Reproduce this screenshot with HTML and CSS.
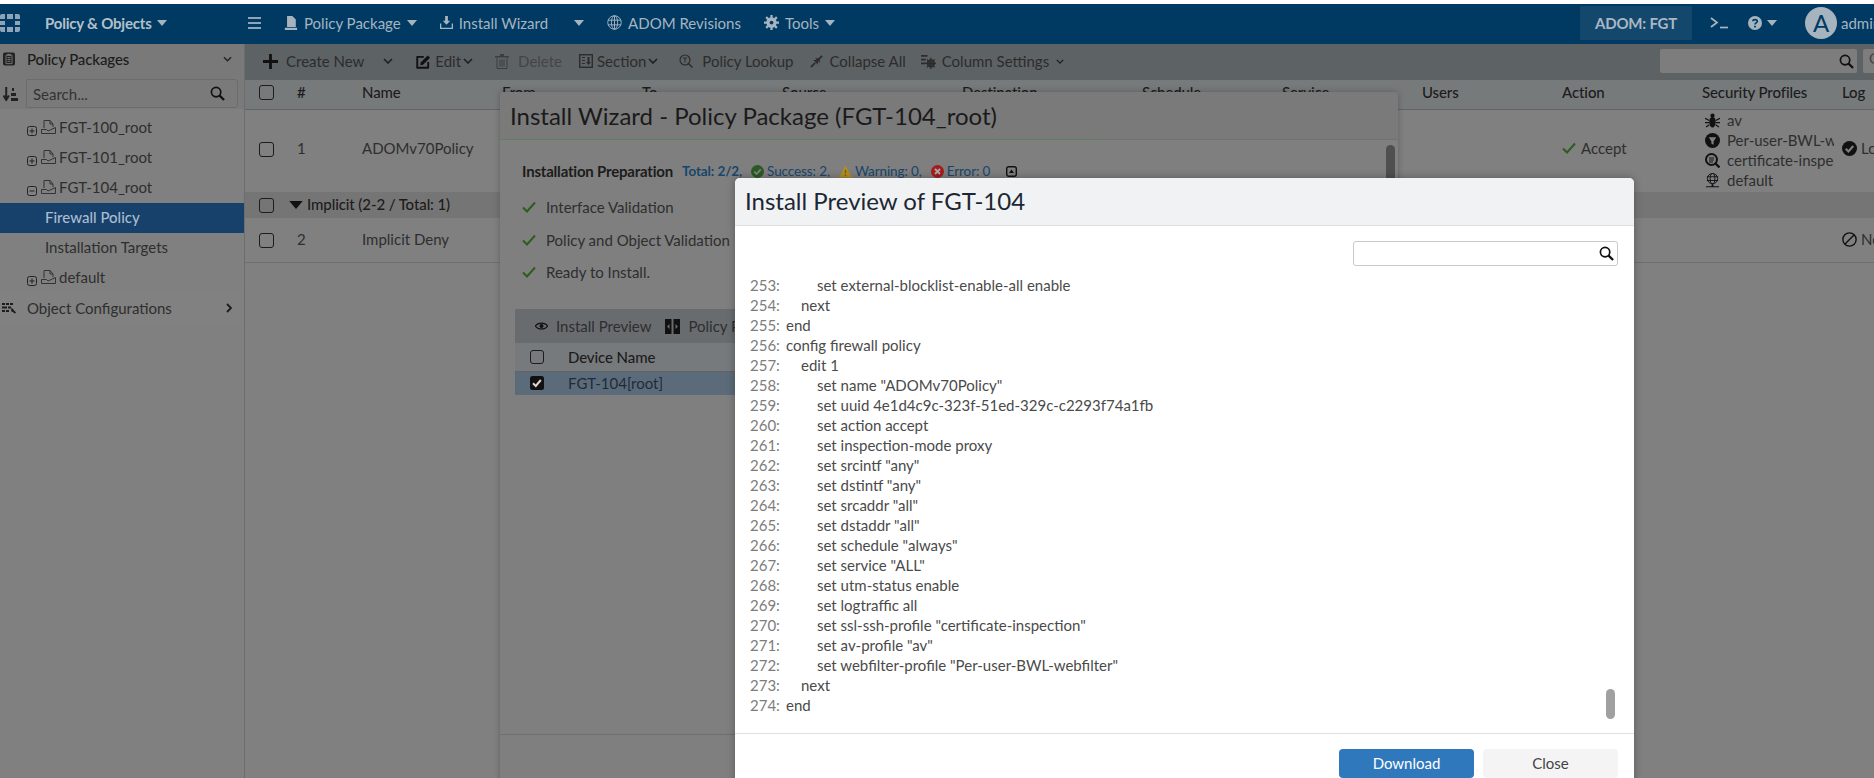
FILE: index.html
```html
<!DOCTYPE html>
<html lang="en">
<head>
<meta charset="utf-8">
<title>Policy &amp; Objects</title>
<link rel="stylesheet" href="styles.css">
</head>
<body>
<svg class="defs" width="0" height="0" aria-hidden="true">
  <symbol id="caret" viewBox="0 0 10 6"><path d="M0 0h10L5 6z" fill="currentColor"/></symbol>
  <symbol id="chev" viewBox="0 0 10 6"><path d="M1 1l4 4 4-4" fill="none" stroke="currentColor" stroke-width="1.5"/></symbol>
  <symbol id="search" viewBox="0 0 16 16"><circle cx="6.5" cy="6.5" r="5" fill="none" stroke="currentColor" stroke-width="1.8"/><path d="M10 10l5 5" stroke="currentColor" stroke-width="2.4"/></symbol>
  <symbol id="check" viewBox="0 0 14 12"><path d="M1 6.5l4 4 8-9" fill="none" stroke="currentColor" stroke-width="2"/></symbol>
  <symbol id="plusbox" viewBox="0 0 10 10"><rect x=".5" y=".5" width="9" height="9" rx="2" fill="none" stroke="currentColor"/><path d="M2.500 5h5M5 2.500v5" stroke="currentColor"/></symbol>
  <symbol id="minusbox" viewBox="0 0 10 10"><rect x=".5" y=".5" width="9" height="9" rx="2" fill="none" stroke="currentColor"/><path d="M2.500 5h5" stroke="currentColor"/></symbol>
  <symbol id="doc" viewBox="0 0 15 14"><path d="M3 8V.5h6l3 3.500V7M9 .5v3.500h3M.5 9.500h5L7 11l7.500-3.500v6H.5z" fill="none" stroke="currentColor"/></symbol>
  <symbol id="bigdoc" viewBox="0 0 15 16"><path d="M3 0h6l4 4v8.500H3zM.5 13.500h14V16H.5z" fill="currentColor"/></symbol>
  <symbol id="install" viewBox="0 0 14 14"><path d="M5.500 0h3v5H11L7 9.500 3 5h2.500z" fill="currentColor"/><path d="M.7 8v5.300h12.600V8" fill="none" stroke="currentColor" stroke-width="1.400"/></symbol>
  <symbol id="globe" viewBox="0 0 16 16"><g fill="none" stroke="currentColor"><circle cx="8" cy="8" r="7.200"/><ellipse cx="8" cy="8" rx="3.300" ry="7.200"/><path d="M8 1v14M1 5.500h14M1 10.500h14"/></g></symbol>
  <symbol id="gear" viewBox="0 0 16 16"><circle cx="8" cy="8" r="5.500" fill="currentColor"/><path d="M8 0v16M0 8h16M2.300 2.300l11.400 11.400M13.700 2.300L2.300 13.700" stroke="currentColor" stroke-width="2.400"/><circle cx="8" cy="8" r="2" fill="#003a62"/></symbol>
  <symbol id="logo" viewBox="0 0 20 18"><path d="M2 0h3v5H0V2a2 2 0 012-2zM7 0h6v5H7zM15 0h3a2 2 0 012 2v3h-5zM0 7h5v4H0zM15 7h5v4h-5zM0 13h5v5H2a2 2 0 01-2-2zM7 13h6v5H7zM15 13h5v3a2 2 0 01-2 2h-3z" fill="currentColor"/></symbol>
  <symbol id="clip" viewBox="0 0 13 14"><rect width="13" height="14" rx="2" fill="currentColor"/><path d="M3.200 3h6.600v9H3.200z" fill="none" stroke="#797979"/><path d="M4.800 5.500h3.400M4.800 7.500h3.400M4.800 9.500h3.400" stroke="#797979"/><path d="M4.500 1.500h4V3h-4z" fill="#797979"/></symbol>
  <symbol id="sort" viewBox="0 0 15 14"><path d="M3.200 0v12M.5 8.500L3.200 13l2.700-4.500" fill="none" stroke="currentColor" stroke-width="2"/><path d="M9 1h2v3H9zM8 6h5v3H8zM8 11h7v3H8z" fill="currentColor"/></symbol>
  <symbol id="objcfg" viewBox="0 0 14 12"><path d="M0 1h3v2H0zM4 1h3v2H4zM8 1h3v2H8zM0 4.500h5v2H0zM6 4.500h3v2H6zM0 8h3v2H0zM4 8h3v2H4zM9.500 5.500l4.500 5-1 1-4-2.500z" fill="currentColor"/></symbol>
  <symbol id="plus" viewBox="0 0 16 16"><path d="M6.500 0h3v6.500H16v3H9.500V16h-3V9.500H0v-3h6.500z" fill="currentColor"/></symbol>
  <symbol id="edit" viewBox="0 0 16 16"><path d="M13 8.500V14.700H1.300V3h7" fill="none" stroke="currentColor" stroke-width="2" stroke-linejoin="round"/><path d="M5 9L12.500 1.500 15 4l-7.500 7.500-3 .5z" fill="currentColor"/></symbol>
  <symbol id="trash" viewBox="0 0 14 15"><path d="M0 2h14v1.500H0zM5 0h4v2H5z" fill="currentColor"/><path d="M2 4v10.500h10V4M5 5.500v7M7 5.500v7M9 5.500v7" fill="none" stroke="currentColor"/></symbol>
  <symbol id="section" viewBox="0 0 14 14"><rect x=".7" y=".7" width="12.600" height="12.600" fill="none" stroke="currentColor" stroke-width="1.400"/><path d="M3 3.500h3M3 6.500h3M3 9.500h3" stroke="currentColor"/><path d="M8.500 3v5H7l2.500 3L12 8h-1.500V3z" fill="currentColor"/></symbol>
  <symbol id="lookup" viewBox="0 0 14 14"><circle cx="6" cy="6" r="5" fill="none" stroke="currentColor" stroke-width="1.200"/><path d="M9.500 9.500L13.500 13.500" stroke="currentColor" stroke-width="1.500"/><path d="M4 4h4M6 4v4.500" stroke="currentColor"/></symbol>
  <symbol id="collapse" viewBox="0 0 14 14"><path d="M1 13l4.500-4.500M13 1L8.500 5.500" stroke="currentColor" stroke-width="2"/><path d="M3.500 5.500h5v5zM5.500 3.500h5v5z" fill="currentColor"/></symbol>
  <symbol id="cols" viewBox="0 0 16 16"><path d="M0 1h7v2H0zM0 5h5v2H0zM0 9h5v2H0z" fill="currentColor"/><circle cx="10.500" cy="10" r="3.500" fill="none" stroke="currentColor" stroke-width="2"/><path d="M10.500 4v12M4.500 10h12M6.300 5.800l8.400 8.400M14.700 5.800l-8.400 8.400" stroke="currentColor" stroke-width="1.300"/></symbol>
  <symbol id="bug" viewBox="0 0 14 14"><ellipse cx="7" cy="8.500" rx="3" ry="5" fill="currentColor"/><circle cx="7" cy="2.500" r="2" fill="currentColor"/><path d="M0 5l4 2M14 5l-4 2M0 9h4M14 9h-4M1 13l3-2M13 13l-3-2" stroke="currentColor" stroke-width="1.200"/></symbol>
  <symbol id="shield" viewBox="0 0 14 14"><circle cx="7" cy="7" r="7" fill="currentColor"/><path d="M3.500 4h7L8 8v3L6 10V8z" fill="#808080"/></symbol>
  <symbol id="magdoc" viewBox="0 0 15 15"><circle cx="6.500" cy="6.500" r="5.500" fill="none" stroke="currentColor" stroke-width="2"/><path d="M4 5h5M4 7h5M4 9h4" stroke="currentColor"/><path d="M10.500 10.500l4 4" stroke="currentColor" stroke-width="2.400"/></symbol>
  <symbol id="web" viewBox="0 0 14 16"><g fill="none" stroke="currentColor"><circle cx="7" cy="6" r="5.500"/><ellipse cx="7" cy="6" rx="2.500" ry="5.500"/><path d="M1 4h12M1 8h12"/></g><path d="M0 14h14v1.200H0zM6 12h2v2H6z" fill="currentColor"/></symbol>
  <symbol id="okc" viewBox="0 0 14 14"><circle cx="7" cy="7" r="7" fill="currentColor"/><path d="M3.500 7.200l2.500 2.500 4.500-5" fill="none" stroke="#808080" stroke-width="2"/></symbol>
  <symbol id="ban" viewBox="0 0 14 14"><circle cx="7" cy="7" r="6.200" fill="none" stroke="currentColor" stroke-width="1.300"/><path d="M2.800 11.200l8.400-8.400" stroke="currentColor" stroke-width="1.300"/></symbol>
  <symbol id="warn" viewBox="0 0 14 13"><path d="M7 0l7 13H0z" fill="currentColor"/><path d="M7 4.500v4M7 9.800v1.500" stroke="#6b5a18" stroke-width="1.400"/></symbol>
  <symbol id="errc" viewBox="0 0 14 14"><circle cx="7" cy="7" r="7" fill="currentColor"/><path d="M4.300 4.300l5.400 5.400M9.700 4.300l-5.400 5.400" stroke="#a9a9a9" stroke-width="2"/></symbol>
  <symbol id="collapsebox" viewBox="0 0 11 11"><rect x=".7" y=".7" width="9.600" height="9.600" rx="2" fill="none" stroke="currentColor" stroke-width="1.400"/><path d="M5.500 3.500L8 7H3z" fill="currentColor"/></symbol>
  <symbol id="eye" viewBox="0 0 14 10"><path d="M.5 5C3 .8 11 .8 13.500 5 11 9.200 3 9.200.5 5z" fill="none" stroke="currentColor" stroke-width="1.400"/><circle cx="7" cy="5" r="2.200" fill="currentColor"/></symbol>
  <symbol id="compare" viewBox="0 0 15 15"><path d="M0 0h6.500v15H0zM8.500 0H15v15H8.500z" fill="currentColor"/><path d="M2 7.500L4.500 5v5zM13 7.500L10.500 5v5z" fill="#6a6a6a"/></symbol>
  <symbol id="ticked" viewBox="0 0 14 14"><rect width="14" height="14" rx="2.500" fill="currentColor"/><path d="M3 7.200l2.800 2.800 5-6" fill="none" stroke="#d8d8d8" stroke-width="2"/></symbol>
  <symbol id="question" viewBox="0 0 14 14"><circle cx="7" cy="7" r="7" fill="currentColor"/><path d="M4.800 5.300C5 3 9.300 3 9.300 5.300 9.300 7 7 6.800 7 8.600" fill="none" stroke="#003a62" stroke-width="1.600"/><path d="M6.100 9.800h1.800v1.700H6.100z" fill="#003a62"/></symbol>
  <symbol id="prompt" viewBox="0 0 18 12"><path d="M1 1l6 4.500L1 10" fill="none" stroke="currentColor" stroke-width="1.700"/><path d="M10 10.500h8" stroke="currentColor" stroke-width="1.700"/></symbol>
</svg>

<div class="page">
  <header class="nav">
    <div class="brand">
      <svg class="i-logo"><use href="#logo"/></svg>
      <span class="brand-name">Policy &amp; Objects</span>
      <svg class="i-caret"><use href="#caret"/></svg>
    </div>
    <div class="menu">
      <span class="burger"></span>
      <span class="menu-item"><svg class="i-14"><use href="#bigdoc"/></svg>Policy Package<svg class="i-caret"><use href="#caret"/></svg></span>
      <span class="menu-item"><svg class="i-13"><use href="#install"/></svg>Install Wizard<svg class="i-caret caret-far"><use href="#caret"/></svg></span>
      <span class="menu-item"><svg class="i-15"><use href="#globe"/></svg>ADOM Revisions</span>
      <span class="menu-item"><svg class="i-15"><use href="#gear"/></svg>Tools<svg class="i-caret"><use href="#caret"/></svg></span>
    </div>
    <div class="nav-right">
      <span class="adom">ADOM: FGT</span>
      <svg class="i-prompt"><use href="#prompt"/></svg>
      <svg class="i-help"><use href="#question"/></svg>
      <svg class="i-caret"><use href="#caret"/></svg>
      <span class="avatar">A</span>
      <span class="user">admin</span>
    </div>
  </header>

  <div class="main">
    <aside class="side">
      <div class="side-head"><svg class="i-clip"><use href="#clip"/></svg><span class="side-title">Policy Packages</span><svg class="i-chev"><use href="#chev"/></svg></div>
      <div class="side-search">
        <svg class="i-sort"><use href="#sort"/></svg>
        <div class="side-input"><span>Search...</span><svg class="i-search"><use href="#search"/></svg></div>
      </div>
      <div class="tree-row"><svg class="i-box"><use href="#plusbox"/></svg><svg class="i-doc"><use href="#doc"/></svg>FGT-100_root</div>
      <div class="tree-row"><svg class="i-box"><use href="#plusbox"/></svg><svg class="i-doc"><use href="#doc"/></svg>FGT-101_root</div>
      <div class="tree-row"><svg class="i-box"><use href="#minusbox"/></svg><svg class="i-doc"><use href="#doc"/></svg>FGT-104_root</div>
      <div class="tree-row tree-sub tree-active">Firewall Policy</div>
      <div class="tree-row tree-sub">Installation Targets</div>
      <div class="tree-row"><svg class="i-box"><use href="#plusbox"/></svg><svg class="i-doc"><use href="#doc"/></svg>default</div>
      <div class="side-foot"><svg class="i-obj"><use href="#objcfg"/></svg><span class="side-title">Object Configurations</span><svg class="i-chevr" viewBox="0 0 6 10"><path d="M1 1l4 4-4 4" fill="none" stroke="currentColor" stroke-width="1.800"/></svg></div>
    </aside>

    <section class="content">
      <div class="toolbar">
        <span class="tool tool-create"><svg class="i-plus"><use href="#plus"/></svg>Create New<svg class="i-chevt chev-far"><use href="#chev"/></svg></span>
        <span class="tool tool-edit"><svg class="i-edit"><use href="#edit"/></svg>Edit<svg class="i-chevt"><use href="#chev"/></svg></span>
        <span class="tool tool-off"><svg class="i-trash"><use href="#trash"/></svg>Delete</span>
        <span class="tool tool-section"><svg class="i-14"><use href="#section"/></svg>Section<svg class="i-chevt"><use href="#chev"/></svg></span>
        <span class="tool tool-lookup"><svg class="i-14"><use href="#lookup"/></svg>Policy Lookup</span>
        <span class="tool tool-collapse"><svg class="i-13"><use href="#collapse"/></svg>Collapse All</span>
        <span class="tool tool-cols"><svg class="i-15"><use href="#cols"/></svg>Column Settings<svg class="i-chevs"><use href="#chev"/></svg></span>
        <div class="tool-search"><svg class="i-search"><use href="#search"/></svg></div>
        <div class="tool-next">G</div>
      </div>
      <div class="t-row t-head">
        <span class="cb"></span><span>#</span><span>Name</span><span>From</span><span>To</span><span>Source</span><span>Destination</span><span>Schedule</span><span>Service</span><span>Users</span><span>Action</span><span>Security Profiles</span><span>Log</span>
      </div>
      <div class="t-row t-one">
        <span class="cb"></span><span>1</span><span>ADOMv70Policy</span><span></span><span></span><span></span><span></span><span></span><span></span><span></span>
        <span class="cell-accept"><svg class="i-ok"><use href="#check"/></svg>Accept</span>
        <span class="profiles">
          <span class="profile"><svg class="i-prof"><use href="#bug"/></svg>av</span>
          <span class="profile"><svg class="i-prof"><use href="#shield"/></svg>Per-user-BWL-webfilter</span>
          <span class="profile"><svg class="i-prof"><use href="#magdoc"/></svg>certificate-inspection</span>
          <span class="profile"><svg class="i-prof"><use href="#web"/></svg>default</span>
        </span>
        <span class="cell-log"><svg class="i-log"><use href="#okc"/></svg>Log</span>
      </div>
      <div class="t-group">
        <span class="cb"></span><svg class="i-group"><use href="#caret"/></svg><span class="group-label">Implicit (2-2 / Total: 1)</span>
      </div>
      <div class="t-row t-two">
        <span class="cb"></span><span>2</span><span>Implicit Deny</span><span></span><span></span><span></span><span></span><span></span><span></span><span></span><span></span><span></span>
        <span class="cell-log"><svg class="i-log"><use href="#ban"/></svg>No Log</span>
      </div>
    </section>
  </div>

  <div class="wizard">
    <div class="wiz-title">Install Wizard - Policy Package (FGT-104_root)</div>
    <div class="wiz-progress"><span class="wiz-bar" style="width:600px"></span></div>
    <div class="wiz-body">
      <div class="wiz-summary">
        <span class="wiz-label">Installation Preparation</span>
        <span class="wiz-stats">
          <b class="stat-total">Total: 2/2,</b>
          <span class="stat"><svg class="i-stat s-ok"><use href="#okc"/></svg>Success: 2,</span>
          <span class="stat"><svg class="i-stat s-warn"><use href="#warn"/></svg>Warning: 0,</span>
          <span class="stat"><svg class="i-stat s-err"><use href="#errc"/></svg>Error: 0</span>
          <svg class="i-colbox"><use href="#collapsebox"/></svg>
        </span>
      </div>
      <div class="wiz-check first"><svg class="i-ok"><use href="#check"/></svg>Interface Validation</div>
      <div class="wiz-check"><svg class="i-ok"><use href="#check"/></svg>Policy and Object Validation</div>
      <div class="wiz-check last"><svg class="i-ok"><use href="#check"/></svg>Ready to Install.</div>
      <div class="dev">
        <div class="dev-tools">
          <span class="dev-tool"><svg class="i-eye"><use href="#eye"/></svg>Install Preview</span>
          <span class="dev-tool"><svg class="i-cmp"><use href="#compare"/></svg>Policy Package Diff</span>
        </div>
        <div class="dev-head"><span class="cb"></span><span>Device Name</span></div>
        <div class="dev-row"><svg class="i-ticked"><use href="#ticked"/></svg><span>FGT-104[root]</span></div>
      </div>
    </div>
    <div class="wiz-foot"></div>
    <span class="wiz-scroll"></span>
  </div>

  <div class="preview">
    <div class="pv-title">Install Preview of FGT-104</div>
    <div class="pv-body">
      <div class="pv-search"><svg class="i-search"><use href="#search"/></svg></div>
      <div class="code">
        <div class="ln"><span class="no">253:</span><span class="tx i2">set external-blocklist-enable-all enable</span></div>
        <div class="ln"><span class="no">254:</span><span class="tx i1">next</span></div>
        <div class="ln"><span class="no">255:</span><span class="tx">end</span></div>
        <div class="ln"><span class="no">256:</span><span class="tx">config firewall policy</span></div>
        <div class="ln"><span class="no">257:</span><span class="tx i1">edit 1</span></div>
        <div class="ln"><span class="no">258:</span><span class="tx i2">set name "ADOMv70Policy"</span></div>
        <div class="ln"><span class="no">259:</span><span class="tx i2">set uuid 4e1d4c9c-323f-51ed-329c-c2293f74a1fb</span></div>
        <div class="ln"><span class="no">260:</span><span class="tx i2">set action accept</span></div>
        <div class="ln"><span class="no">261:</span><span class="tx i2">set inspection-mode proxy</span></div>
        <div class="ln"><span class="no">262:</span><span class="tx i2">set srcintf "any"</span></div>
        <div class="ln"><span class="no">263:</span><span class="tx i2">set dstintf "any"</span></div>
        <div class="ln"><span class="no">264:</span><span class="tx i2">set srcaddr "all"</span></div>
        <div class="ln"><span class="no">265:</span><span class="tx i2">set dstaddr "all"</span></div>
        <div class="ln"><span class="no">266:</span><span class="tx i2">set schedule "always"</span></div>
        <div class="ln"><span class="no">267:</span><span class="tx i2">set service "ALL"</span></div>
        <div class="ln"><span class="no">268:</span><span class="tx i2">set utm-status enable</span></div>
        <div class="ln"><span class="no">269:</span><span class="tx i2">set logtraffic all</span></div>
        <div class="ln"><span class="no">270:</span><span class="tx i2">set ssl-ssh-profile "certificate-inspection"</span></div>
        <div class="ln"><span class="no">271:</span><span class="tx i2">set av-profile "av"</span></div>
        <div class="ln"><span class="no">272:</span><span class="tx i2">set webfilter-profile "Per-user-BWL-webfilter"</span></div>
        <div class="ln"><span class="no">273:</span><span class="tx i1">next</span></div>
        <div class="ln"><span class="no">274:</span><span class="tx">end</span></div>
      </div>
      <span class="pv-scroll"></span>
    </div>
    <div class="pv-foot">
      <button class="btn btn-primary" type="button">Download</button>
      <button class="btn btn-plain" type="button">Close</button>
    </div>
  </div>
</div>
</body>
</html>
```

FILE: styles.css
```css
* { box-sizing: border-box; }
html, body { margin: 0; padding: 0; background: #fff; }
body { font-family: Lato, "Open Sans", sans-serif; font-size: 15px; color: #262626; }
.defs { position: absolute; }
svg { display: block; flex: none; }

.page { position: relative; width: 1874px; height: 778px; overflow: hidden; padding-top: 4px; background: #808080; box-shadow: inset 0 4px 0 #fff; }

/* top bar */
.nav { display: flex; align-items: center; height: 40px; padding-bottom: 3px; background: #003a62; color: #a6b4c0; }
.brand { display: flex; align-items: center; width: 248px; flex: none; }
.i-logo { width: 20px; height: 18px; color: #8fa4b6; }
.brand-name { margin-left: 25px; font-weight: 700; color: #b3c0cb; letter-spacing: -.2px; }
.i-caret { width: 10px; height: 6px; margin-left: 5px; color: #a6b4c0; }
.menu { display: flex; align-items: center; gap: 23px; }
.burger { width: 13px; height: 12px; border-top: 2px solid #8fa4b6; border-bottom: 2px solid #8fa4b6; position: relative; }
.burger::after { content: ""; position: absolute; left: 0; right: 0; top: 3px; height: 2px; background: #8fa4b6; }
.menu-item { display: flex; align-items: center; gap: 6px; }
.menu-item .i-caret { margin-left: 0; }
.menu-item .caret-far { margin-left: 20px; }
.i-13 { width: 13px; height: 13px; }
.i-14 { width: 14px; height: 14px; }
.i-15 { width: 15px; height: 15px; }
.nav-right { display: flex; align-items: center; margin-left: auto; width: 294px; flex: none; overflow: hidden; height: 37px; }
.adom { width: 112px; height: 34px; display: flex; align-items: center; justify-content: center; background: #14476c; font-weight: 700; color: #a9b7c3; flex: none; letter-spacing: -.2px; }
.i-prompt { width: 18px; height: 12px; margin-left: 18px; color: #a6b4c0; }
.i-help { width: 14px; height: 14px; margin-left: 20px; color: #a6b4c0; }
.avatar { width: 32px; height: 32px; margin-left: 28px; border-radius: 50%; background: #a6b4c0; color: #003a62; display: flex; align-items: center; justify-content: center; font-size: 24px; flex: none; }
.user { margin-left: 4px; color: #a6b4c0; }

/* main */
.main { display: flex; height: 734px; }
.side { width: 245px; flex: none; border-right: 1px solid #6d6d6d; background: #808080; color: #333; }
.side-head { display: flex; align-items: center; height: 35px; background: #797979; padding: 0 12px 6px 3px; color: #222; }
.i-clip { width: 12px; height: 14px; color: #222; }
.side-title { margin-left: 12px; flex: 1; }
.side-head .side-title { font-weight: 500; color: #1c1c1c; letter-spacing: -.1px; }
.i-chev { width: 9px; height: 6px; color: #222; }
.side-search { display: flex; align-items: flex-start; height: 34px; padding-left: 3px; background: linear-gradient(#7a7a7a 30px, #808080 30px); }
.i-sort { width: 15px; height: 14px; margin-top: 8px; color: #222; }
.side-input { display: flex; align-items: center; justify-content: space-between; margin-left: 8px; width: 212px; height: 29px; padding: 0 12px 0 6px; border: 1px solid #6c6c6c; border-radius: 0 3px 3px 0; color: #333; }
.i-search { width: 15px; height: 15px; color: #111; }
.tree-row { display: flex; align-items: center; height: 30px; padding: 0 0 2px 27px; color: #2e2e2e; }
.i-box { width: 10px; height: 10px; margin-top: 7px; color: #222; }
.i-doc { width: 15px; height: 14px; margin: 0 3px 0 4px; color: #333; }
.tree-sub { padding-left: 45px; }
.tree-active { background: #17406a; color: #a8bdd1; font-weight: 500; }
.side-foot { display: flex; align-items: center; height: 30px; padding: 0 12px 0 2px; background: #818181; color: #2e2e2e; }
.side-foot .side-title { margin-left: 11px; }
.i-obj { width: 14px; height: 12px; color: #1c1c1c; }
.i-chevr { width: 6px; height: 10px; color: #1c1c1c; }

.content { flex: 1; min-width: 0; }
.toolbar { display: flex; align-items: center; height: 36px; padding: 0 0 2px 18px; background: #5d6265; color: #2c2c2c; position: relative; }
.tool { display: flex; align-items: center; gap: 4px; white-space: nowrap; }
.tool-edit { margin-left: 23px; }
.tool-off { margin-left: 22px; color: #454545; gap: 9px; }
.tool-section { margin-left: 17px; }
.tool-lookup { margin-left: 21px; gap: 9px; }
.tool-collapse { margin-left: 17px; gap: 6px; }
.tool-cols { margin-left: 15px; gap: 6px; }
.i-plus { width: 15px; height: 15px; color: #111; margin-right: 4px; }
.i-chevt { width: 10px; height: 6px; margin-left: -2px; color: #1c1c1c; }
.tool-create .chev-far { margin-left: 15px; }
.i-chevs { width: 8px; height: 5px; margin-left: 1px; color: #1c1c1c; }
.i-edit { width: 15px; height: 15px; color: #111; }
.i-trash { width: 14px; height: 15px; color: #3d3d3d; }
.tool-search { margin-left: auto; width: 197px; height: 24px; background: #7d7d7d; border-radius: 2px; display: flex; align-items: center; justify-content: flex-end; padding-right: 3px; flex: none; }
.tool-next { width: 20px; height: 24px; margin-left: 6px; margin-right: -9px; background: #7d7d7d; border-radius: 2px 0 0 2px; color: #444; padding-left: 6px; line-height: 18px; flex: none; overflow: hidden; }

.t-row { display: grid; grid-template-columns: 52px 65px 140px 140px 140px 180px 180px 140px 140px 140px 140px 140px 1fr; align-items: center; }
.t-row > span { padding-bottom: 2px; }
.t-row > .cb { padding-bottom: 0; }
.t-head { height: 30px; padding-bottom: 4px; background: #777a7b; border-bottom: 1px solid #636363; font-weight: 500; color: #1c1c1c; letter-spacing: -.1px; }
.cb { display: block; width: 15px; height: 15px; margin-left: 14px; border: 1.500px solid #1c1c1c; border-radius: 3px; }
.t-one { height: 82px; padding-bottom: 4px; color: #2e2e2e; }
.t-two { height: 45px; border-bottom: 1px solid #6f6f6f; color: #2e2e2e; }
.t-group { display: flex; align-items: center; height: 26px; background: #757575; font-weight: 500; color: #1c1c1c; letter-spacing: -.1px; }
.group-label { padding-bottom: 2px; }
.i-group { width: 14px; height: 8px; margin: 0 4px 0 15px; color: #111; }
.cell-accept { display: flex; align-items: center; gap: 5px; }
.i-ok { width: 14px; height: 12px; color: #2e5c1f; }
.t-row > .profiles { display: flex; flex-direction: column; overflow: hidden; width: 132px; padding-bottom: 0; margin-top: 2px; }
.profile { display: flex; align-items: center; height: 20px; white-space: nowrap; gap: 7px; padding-left: 3px; }
.i-prof { width: 15px; height: 15px; color: #111; flex: none; }
.cell-log { display: flex; align-items: center; gap: 4px; white-space: nowrap; }
.i-log { width: 15px; height: 15px; color: #111; }

/* wizard dialog */
.wizard { position: absolute; left: 500px; top: 92px; width: 898px; height: 700px; background: #7f7f7f; border-radius: 4px 4px 0 0; box-shadow: 0 0 6px rgba(0,0,0,.25); }
.wiz-title { height: 47px; padding-left: 10px; background: #7a7a7a; font-size: 24px; line-height: 48px; color: #1a1a1a; border-radius: 4px 4px 0 0; }
.wiz-progress { height: 1px; background: #727272; }
.wiz-bar { display: block; height: 1px; background: #5d7f63; }
.wiz-body { padding: 21px 0 0 15px; }
.wiz-summary { display: flex; align-items: center; height: 20px; padding-left: 7px; }
.wiz-label { font-weight: 700; color: #1c1c1c; letter-spacing: -.2px; }
.wiz-stats { display: flex; align-items: center; margin-left: 9px; font-size: 13.500px; color: #17466c; gap: 9px; letter-spacing: -.1px; }
.stat-total { font-weight: 700; }
.stat { display: flex; align-items: center; gap: 3px; }
.i-stat { width: 13px; height: 13px; }
.s-ok { color: #2a5a24; }
.s-warn { color: #b48f1c; }
.s-err { color: #a81b1b; }
.i-colbox { width: 11px; height: 11px; margin-left: 7px; color: #111; }
.wiz-check { display: flex; align-items: center; gap: 10px; height: 20px; margin-top: 13px; padding-left: 7px; color: #2e2e2e; }
.wiz-check.first { margin-top: 16px; }
.wiz-check.last { margin-top: 12px; }
.dev { margin-top: 27px; width: 700px; }
.dev-tools { display: flex; align-items: center; gap: 14px; height: 34px; background: #686c6f; padding-left: 20px; color: #2e2e2e; }
.dev-tool { display: flex; align-items: center; gap: 8px; }
.i-eye { width: 13px; height: 10px; color: #111; }
.i-cmp { width: 15px; height: 15px; color: #111; }
.dev-head { display: flex; align-items: center; height: 29px; background: #767a7c; border-bottom: 1px solid #636363; font-weight: 500; color: #1c1c1c; letter-spacing: -.1px; }
.dev-head .cb { width: 14px; height: 14px; margin: 0 24px 0 15px; }
.dev-row { display: flex; align-items: center; height: 23px; padding-bottom: 1px; background: #5c6b79; color: #1e2c3a; }
.i-ticked { width: 14px; height: 14px; margin: 0 24px 0 15px; color: #111; }
.wiz-foot { position: absolute; left: 0; right: 0; top: 642px; border-top: 1px solid #6f6f6f; }
.wiz-scroll { position: absolute; left: 886px; top: 53px; width: 9px; height: 60px; border-radius: 5px; background: #4f4f4f; }

/* preview dialog */
.preview { position: absolute; left: 735px; top: 178px; width: 899px; height: 620px; background: #fff; border-radius: 5px 5px 0 0; display: flex; flex-direction: column; box-shadow: 0 0 8px rgba(0,0,0,.3); }
.pv-title { height: 48px; flex: none; padding-left: 10px; background: #f1f2f4; border-bottom: 1px solid #dfe0e2; border-radius: 5px 5px 0 0; font-size: 24px; line-height: 46px; color: #1c2733; }
.pv-body { position: relative; height: 507px; flex: none; }
.pv-search { position: absolute; left: 618px; top: 15px; width: 265px; height: 25px; border: 1px solid #c9c9c9; border-radius: 3px; display: flex; align-items: center; justify-content: flex-end; padding-right: 3px; }
.code { padding: 49px 0 0 15px; }
.ln { display: flex; height: 20px; line-height: 20px; white-space: nowrap; }
.no { width: 36px; color: #7d7d7d; flex: none; }
.tx { color: #4a4a4a; }
.i1 { padding-left: 15px; }
.i2 { padding-left: 31px; }
.pv-scroll { position: absolute; left: 871px; top: 463px; width: 9px; height: 30px; border-radius: 5px; background: #a0a0a0; }
.pv-foot { display: flex; gap: 9px; padding: 15px 0 0 604px; border-top: 1px solid #e0e0e0; flex: none; }
.btn { width: 135px; height: 29px; border: 0; border-radius: 4px; font: 15px Lato, sans-serif; padding: 0 0 1px; }
.btn-primary { background: #2f78bc; color: #fff; }
.btn-plain { background: #f4f4f4; color: #444; }
```
